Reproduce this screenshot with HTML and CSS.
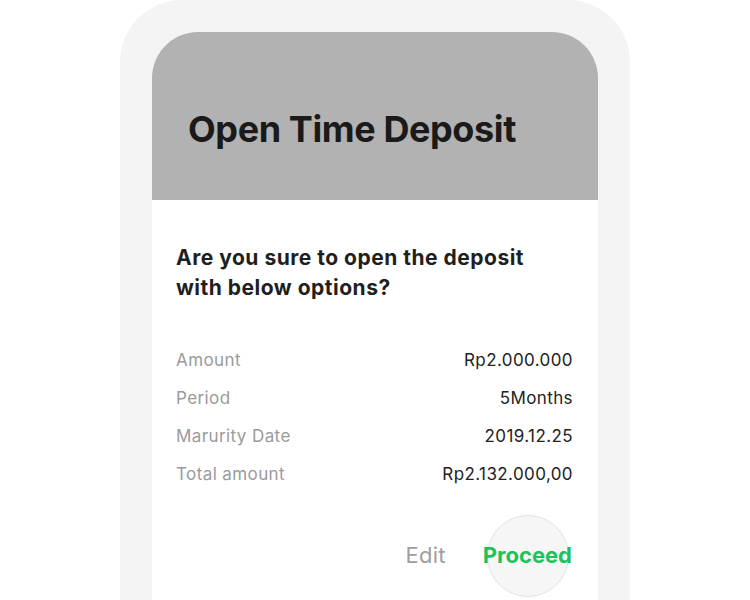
FILE: index.html
```html
<!DOCTYPE html>
<html lang="en">
<head>
  <meta charset="UTF-8">
  <meta name="viewport" content="width=device-width, initial-scale=1">
  <title>Open Time Deposit</title>
  <link rel="stylesheet" href="styles.css">
</head>
<body>
  <div class="phone">
    <div class="screen">
      <div class="header">
        <h1>Open Time Deposit</h1>
      </div>
      <div class="content">
        <p class="question">Are you sure to open the deposit with below options?</p>
        <div class="details">
          <div class="row"><span class="label">Amount</span><span class="value">Rp2.000.000</span></div>
          <div class="row"><span class="label">Period</span><span class="value">5Months</span></div>
          <div class="row"><span class="label">Marurity Date</span><span class="value">2019.12.25</span></div>
          <div class="row"><span class="label">Total amount</span><span class="value">Rp2.132.000,00</span></div>
        </div>
        <div class="actions">
          <button class="btn btn-edit">Edit</button>
          <button class="btn btn-proceed">Proceed</button>
        </div>
      </div>
    </div>
  </div>
</body>
</html>
```

FILE: styles.css
```css
* {
  box-sizing: border-box;
}

body {
  margin: 0;
  background: #fff;
  font-family: 'Inter', 'Roboto', sans-serif;
  color: #1a1a1a;
}

.phone {
  width: 510px;
  height: 600px;
  margin: 0 auto;
  padding: 32px 32px 0;
  background: #f4f4f4;
  border-radius: 62px 62px 0 0;
  overflow: hidden;
}

.screen {
  height: 100%;
  background: #fff;
  border-radius: 46px 46px 0 0;
  overflow: hidden;
}

.header {
  height: 168px;
  background: #b2b2b2;
  padding: 75px 0 0 36px;
}

h1 {
  margin: 0;
  font-size: 36px;
  line-height: 44px;
  font-weight: 700;
  letter-spacing: -0.4px;
  color: #1a1a1a;
}

.content {
  padding: 0 26px 0 24px;
}

.question {
  max-width: 380px;
  margin: 43px 0 0;
  font-size: 21px;
  line-height: 30px;
  font-weight: 700;
  letter-spacing: 0.5px;
  color: #1f1f1f;
}

.details {
  margin-top: 38px;
}

.row {
  display: flex;
  justify-content: space-between;
  height: 38px;
  line-height: 38px;
  font-size: 17px;
  letter-spacing: 0.4px;
}

.label {
  color: #9a9a9a;
}

.value {
  color: #222;
  margin-right: -1px;
}

.actions {
  display: flex;
  justify-content: flex-end;
  align-items: center;
  gap: 37px;
  margin-top: 21px;
}

.btn {
  position: relative;
  border: none;
  background: none;
  padding: 0;
  font-family: inherit;
  font-size: 22px;
  line-height: 82px;
  cursor: pointer;
}

.btn-edit {
  color: #9e9e9e;
  letter-spacing: 0.3px;
}

.btn-proceed {
  z-index: 0;
  color: #1dc25f;
  font-weight: 700;
}

.btn-proceed::before {
  content: "";
  position: absolute;
  left: 50%;
  top: 50%;
  width: 80px;
  height: 80px;
  margin: -40px 0 0 -40px;
  border-radius: 50%;
  background: #f6f6f6;
  border: 1px solid #e2e2e2;
  z-index: -1;
}
```
